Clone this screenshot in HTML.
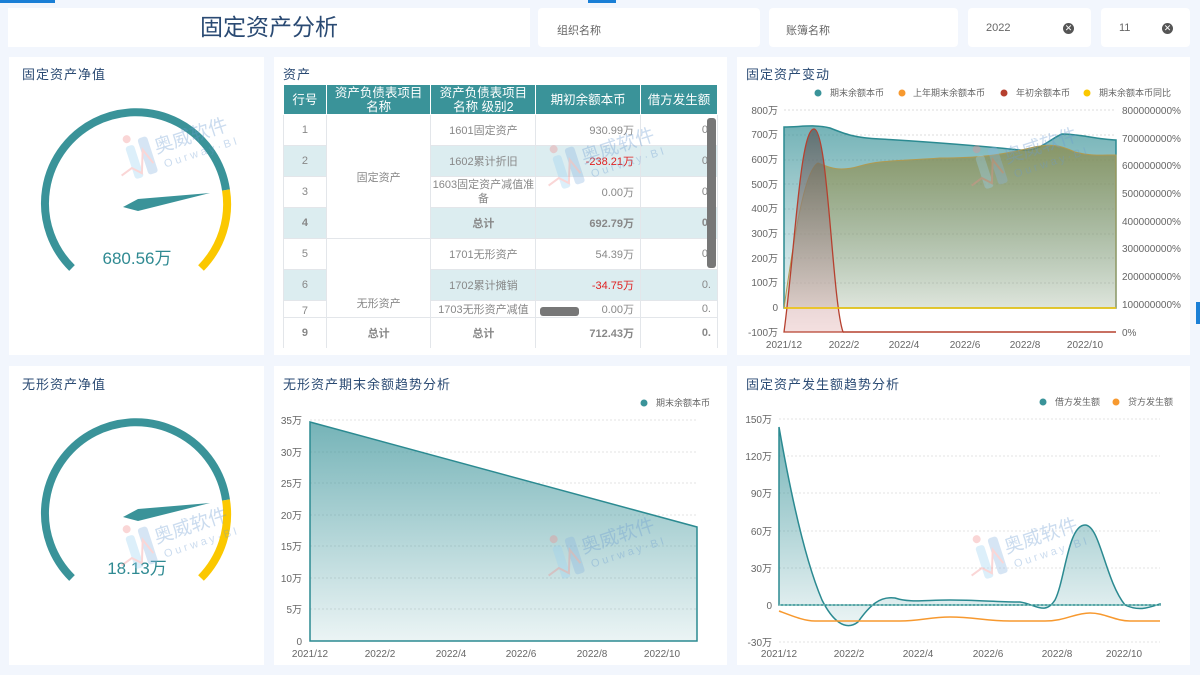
<!DOCTYPE html>
<html><head><meta charset="utf-8"><style>
*{margin:0;padding:0;box-sizing:border-box}
body{width:1200px;height:675px;background:#f2f6fd;font-family:"Liberation Sans","Noto Sans CJK SC",sans-serif;position:relative;overflow:hidden}
.p{position:absolute;background:#fff}
.t{position:absolute;font-size:13px;color:#2a4a73;letter-spacing:1px}
.f{position:absolute;background:#fff;border-radius:4px;font-size:11px;color:#666}
.x{position:absolute;width:11px;height:11px;border-radius:50%;background:#555;color:#fff;font-size:9px;line-height:11px;text-align:center}
table{border-collapse:collapse;position:absolute;left:283px;top:84px;font-size:11px;color:#888;table-layout:fixed}
td,th{border:1px solid #e3e6ea;text-align:center;overflow:hidden;white-space:nowrap}
th{background:#3a9399;color:#fff;font-weight:normal;height:30px;line-height:14px;white-space:normal;border-color:#fff;font-size:12.5px;word-break:break-all;padding:0 2px}
td{height:31px}
.b td.s{background:#dcedf0}
.r{color:#e02020;text-align:right;padding-right:6px}
.n{text-align:right;padding-right:6px}
</style></head><body>
<div style="position:absolute;left:0;top:0;width:55px;height:3px;background:#1a7fd6"></div>
<div style="position:absolute;left:588px;top:0;width:28px;height:3px;background:#1a7fd6"></div>
<div style="position:absolute;left:1196px;top:302px;width:4px;height:22px;background:#1a7fd6"></div>
<div class="p" style="left:8px;top:8px;width:522px;height:39px;font-size:23px;color:#2a4a73;text-align:center;line-height:39px">固定资产分析</div>
<div class="f" style="left:538px;top:8px;width:222px;height:39px;padding:14px 0 0 19px">组织名称</div>
<div class="f" style="left:769px;top:8px;width:189px;height:39px;padding:14px 0 0 17px">账簿名称</div>
<div class="f" style="left:968px;top:8px;width:123px;height:39px;padding:14px 0 0 18px">2022<div class="x" style="left:95px;top:15px">✕</div></div>
<div class="f" style="left:1101px;top:8px;width:89px;height:39px;padding:14px 0 0 18px">11<div class="x" style="left:61px;top:15px">✕</div></div>

<div class="p" style="left:9px;top:57px;width:255px;height:298px"></div>
<div class="p" style="left:274px;top:57px;width:453px;height:298px"></div>
<div class="p" style="left:737px;top:57px;width:453px;height:298px"></div>
<div class="p" style="left:9px;top:366px;width:255px;height:299px"></div>
<div class="p" style="left:274px;top:366px;width:453px;height:299px"></div>
<div class="p" style="left:737px;top:366px;width:453px;height:299px"></div>
<div class="t" style="left:22px;top:64px">固定资产净值</div>
<div class="t" style="left:283px;top:64px">资产</div>
<div class="t" style="left:746px;top:64px">固定资产变动</div>
<div class="t" style="left:22px;top:374px">无形资产净值</div>
<div class="t" style="left:283px;top:374px">无形资产期末余额趋势分析</div>
<div class="t" style="left:746px;top:374px">固定资产发生额趋势分析</div>

<div style="position:absolute;left:283px;top:84px;width:435px;height:264px;overflow:hidden">
<table style="left:0;top:0">
<colgroup><col style="width:43px"><col style="width:105px"><col style="width:105px"><col style="width:105px"><col style="width:77px"></colgroup>
<tr><th>行号</th><th>资产负债表项目名称</th><th>资产负债表项目名称 级别2</th><th>期初余额本币</th><th style="white-space:nowrap">借方发生额</th></tr>
<tr><td>1</td><td rowspan="4">固定资产</td><td>1601固定资产</td><td class="n">930.99万</td><td class="n">0.</td></tr>
<tr class="b"><td class="s">2</td><td class="s">1602累计折旧</td><td class="s r">-238.21万</td><td class="s n">0.</td></tr>
<tr><td>3</td><td style="white-space:normal;line-height:14px">1603固定资产减值准备</td><td class="n">0.00万</td><td class="n">0.</td></tr>
<tr class="b"><td class="s"><b>4</b></td><td class="s"><b>总计</b></td><td class="s n"><b>692.79万</b></td><td class="s n"><b>0.</b></td></tr>
<tr><td>5</td><td rowspan="3" style="vertical-align:bottom;padding-bottom:6px">无形资产</td><td>1701无形资产</td><td class="n">54.39万</td><td class="n">0.</td></tr>
<tr class="b"><td class="s">6</td><td class="s">1702累计摊销</td><td class="s r">-34.75万</td><td class="s n">0.</td></tr>
<tr><td style="height:16px;vertical-align:bottom">7</td><td style="height:16px">1703无形资产减值</td><td class="n" style="height:16px">0.00万</td><td class="n" style="height:16px">0.</td></tr>
<tr><td style="height:31px"><b>9</b></td><td><b>总计</b></td><td><b>总计</b></td><td class="n"><b>712.43万</b></td><td class="n"><b>0.</b></td></tr>
</table></div>
<div style="position:absolute;left:707px;top:118px;width:9px;height:150px;background:#777;border-radius:3px"></div>
<div style="position:absolute;left:540px;top:307px;width:39px;height:9px;background:#777;border-radius:3px"></div>

<svg width="1200" height="675" style="position:absolute;left:0;top:0" font-family="Liberation Sans,Noto Sans CJK SC,sans-serif">
<defs>
<linearGradient id="g1" x1="0" y1="0" x2="0" y2="1"><stop offset="0" stop-color="#3a9399" stop-opacity=".7"/><stop offset="1" stop-color="#3a9399" stop-opacity=".1"/></linearGradient>
<linearGradient id="g2" x1="0" y1="0" x2="0" y2="1"><stop offset="0" stop-color="#8a8a4a" stop-opacity=".75"/><stop offset="1" stop-color="#aaa878" stop-opacity=".2"/></linearGradient>
<linearGradient id="g3" x1="0" y1="0" x2="0" y2="1"><stop offset="0" stop-color="#555" stop-opacity=".7"/><stop offset="1" stop-color="#e9c0c0" stop-opacity=".5"/></linearGradient>
<g id="wm"><rect x="14" y="12" width="9" height="34" rx="3" fill="#9cd0f0"/><rect x="28" y="8" width="10" height="38" rx="3" fill="#8ab4e0"/><circle cx="18" cy="5" r="4" fill="#f08a8a"/><path d="M2 38 L14 34 L22 42 L30 20 L36 36" fill="none" stroke="#f08a8a" stroke-width="2"/><text x="42" y="28" font-size="19" fill="#6a9ad0">奥威软件</text><text x="46" y="44" font-size="11" fill="#6a9ad0" letter-spacing="3">Ourway·BI</text></g>
</defs>
<!-- gauges -->
<g fill="none" stroke-width="8">
<path d="M72 268 A91 91 0 1 1 226 190" stroke="#3a9399"/>
<path d="M226 190 A91 91 0 0 1 201 268" stroke="#fbc800"/>
<path d="M72 578 A91 91 0 1 1 226 500" stroke="#3a9399"/>
<path d="M226 500 A91 91 0 0 1 201 578" stroke="#fbc800"/>
</g>
<polygon points="123,207 138,199 210,193 138,211" fill="#3a9399"/>
<polygon points="123,517 138,509 210,503 138,521" fill="#3a9399"/>
<text x="137" y="264" font-size="17" fill="#2f8a92" text-anchor="middle">680.56万</text>
<text x="137" y="574" font-size="17" fill="#2f8a92" text-anchor="middle">18.13万</text>

<!-- top-right chart -->
<g font-size="10" fill="#666">
<g stroke="#ddd" stroke-dasharray="2,2">
<line x1="784" y1="110" x2="1116" y2="110"/><line x1="784" y1="135" x2="1116" y2="135"/><line x1="784" y1="160" x2="1116" y2="160"/><line x1="784" y1="184" x2="1116" y2="184"/><line x1="784" y1="209" x2="1116" y2="209"/><line x1="784" y1="234" x2="1116" y2="234"/><line x1="784" y1="258" x2="1116" y2="258"/><line x1="784" y1="283" x2="1116" y2="283"/></g>
<text x="778" y="114" text-anchor="end">800万</text><text x="778" y="138" text-anchor="end">700万</text><text x="778" y="163" text-anchor="end">600万</text><text x="778" y="188" text-anchor="end">500万</text><text x="778" y="212" text-anchor="end">400万</text><text x="778" y="237" text-anchor="end">300万</text><text x="778" y="262" text-anchor="end">200万</text><text x="778" y="286" text-anchor="end">100万</text><text x="778" y="311" text-anchor="end">0</text><text x="778" y="336" text-anchor="end">-100万</text>
<text x="1122" y="114">800000000%</text><text x="1122" y="142">700000000%</text><text x="1122" y="169">600000000%</text><text x="1122" y="197">500000000%</text><text x="1122" y="225">400000000%</text><text x="1122" y="252">300000000%</text><text x="1122" y="280">200000000%</text><text x="1122" y="308">100000000%</text><text x="1122" y="336">0%</text>
<text x="784" y="348" text-anchor="middle">2021/12</text><text x="844" y="348" text-anchor="middle">2022/2</text><text x="904" y="348" text-anchor="middle">2022/4</text><text x="965" y="348" text-anchor="middle">2022/6</text><text x="1025" y="348" text-anchor="middle">2022/8</text><text x="1085" y="348" text-anchor="middle">2022/10</text>
<circle cx="818" cy="93" r="3.5" fill="#3a9399"/><text x="830" y="96" font-size="9">期末余额本币</text>
<circle cx="902" cy="93" r="3.5" fill="#f7992f"/><text x="913" y="96" font-size="9">上年期末余额本币</text>
<circle cx="1004" cy="93" r="3.5" fill="#b6402f"/><text x="1016" y="96" font-size="9">年初余额本币</text>
<circle cx="1087" cy="93" r="3.5" fill="#fbc800"/><text x="1099" y="96" font-size="9">期末余额本币同比</text>
</g>
<path d="M784 127 C800 127 815 124 830 128 C845 134 855 138 880 139 C930 142 980 146 1020 150 C1040 152 1048 140 1062 134 C1080 134 1095 139 1116 140 L1116 308 L784 308 Z" fill="url(#g1)" stroke="#2b8a91" stroke-width="1.5"/>
<path d="M784 308 C795 230 805 170 818 163 C830 168 840 172 860 166 C880 160 900 161 940 158 C980 158 1000 155 1030 148 C1050 143 1060 145 1075 152 C1090 156 1100 155 1116 155 L1116 308 Z" fill="url(#g2)" stroke="#b09a50" stroke-width="1"/>
<path d="M784 332 C795 250 800 129 814 129 C828 129 832 300 843 332 Z" fill="url(#g3)" stroke="#b6402f" stroke-width="1.3"/>
<line x1="784" y1="308" x2="1116" y2="308" stroke="#fbc800" stroke-width="1.5"/>
<line x1="843" y1="332" x2="1116" y2="332" stroke="#b6402f" stroke-width="1.5"/>

<!-- bottom-middle chart -->
<g font-size="10" fill="#666">
<g stroke="#e3e3e3" stroke-dasharray="2,2">
<line x1="310" y1="420" x2="697" y2="420"/><line x1="310" y1="452" x2="697" y2="452"/><line x1="310" y1="483" x2="697" y2="483"/><line x1="310" y1="515" x2="697" y2="515"/><line x1="310" y1="546" x2="697" y2="546"/><line x1="310" y1="578" x2="697" y2="578"/><line x1="310" y1="609" x2="697" y2="609"/></g>
<text x="302" y="424" text-anchor="end">35万</text><text x="302" y="456" text-anchor="end">30万</text><text x="302" y="487" text-anchor="end">25万</text><text x="302" y="519" text-anchor="end">20万</text><text x="302" y="550" text-anchor="end">15万</text><text x="302" y="582" text-anchor="end">10万</text><text x="302" y="613" text-anchor="end">5万</text><text x="302" y="645" text-anchor="end">0</text>
<text x="310" y="657" text-anchor="middle">2021/12</text><text x="380" y="657" text-anchor="middle">2022/2</text><text x="451" y="657" text-anchor="middle">2022/4</text><text x="521" y="657" text-anchor="middle">2022/6</text><text x="592" y="657" text-anchor="middle">2022/8</text><text x="662" y="657" text-anchor="middle">2022/10</text>
<circle cx="644" cy="403" r="3.5" fill="#3a9399"/><text x="656" y="406" font-size="9">期末余额本币</text>
</g>
<path d="M310 422 L697 527 L697 641 L310 641 Z" fill="url(#g1)" stroke="#2b8a91" stroke-width="1.5"/>

<!-- bottom-right chart -->
<g font-size="10" fill="#666">
<g stroke="#e3e3e3" stroke-dasharray="2,2">
<line x1="779" y1="419" x2="1160" y2="419"/><line x1="779" y1="456" x2="1160" y2="456"/><line x1="779" y1="493" x2="1160" y2="493"/><line x1="779" y1="531" x2="1160" y2="531"/><line x1="779" y1="568" x2="1160" y2="568"/><line x1="779" y1="642" x2="1160" y2="642"/></g>
<text x="772" y="423" text-anchor="end">150万</text><text x="772" y="460" text-anchor="end">120万</text><text x="772" y="497" text-anchor="end">90万</text><text x="772" y="535" text-anchor="end">60万</text><text x="772" y="572" text-anchor="end">30万</text><text x="772" y="609" text-anchor="end">0</text><text x="772" y="646" text-anchor="end">-30万</text>
<text x="779" y="657" text-anchor="middle">2021/12</text><text x="849" y="657" text-anchor="middle">2022/2</text><text x="918" y="657" text-anchor="middle">2022/4</text><text x="988" y="657" text-anchor="middle">2022/6</text><text x="1057" y="657" text-anchor="middle">2022/8</text><text x="1124" y="657" text-anchor="middle">2022/10</text>
<circle cx="1043" cy="402" r="3.5" fill="#3a9399"/><text x="1055" y="405" font-size="9">借方发生额</text>
<circle cx="1116" cy="402" r="3.5" fill="#f7992f"/><text x="1128" y="405" font-size="9">贷方发生额</text>
</g>
<path d="M779 427 C790 490 805 560 822 600 C832 620 845 632 858 622 C870 605 880 596 895 598 C910 603 925 600 950 600 C975 600 1000 602 1020 602 C1035 604 1045 616 1055 600 C1065 580 1068 525 1085 525 C1100 525 1105 580 1125 605 C1140 612 1150 607 1160 604 L1160 605 L779 605 Z" fill="url(#g1)" stroke="#2b8a91" stroke-width="1.5"/>
<line x1="779" y1="605" x2="1160" y2="605" stroke="#8cb" stroke-dasharray="2,2"/>
<path d="M779 611 C795 617 805 621 815 621 L900 621 C920 621 930 617 950 617 C975 617 985 621 1010 621 L1045 621 C1065 621 1075 613 1090 613 C1105 613 1115 621 1130 621 L1160 621" fill="none" stroke="#f7992f" stroke-width="1.5"/>

<!-- watermarks -->
<g opacity=".35">
<use href="#wm" transform="translate(108,140) rotate(-18)"/>
<use href="#wm" transform="translate(535,150) rotate(-18)"/>
<use href="#wm" transform="translate(958,150) rotate(-18)"/>
<use href="#wm" transform="translate(108,530) rotate(-18)"/>
<use href="#wm" transform="translate(535,540) rotate(-18)"/>
<use href="#wm" transform="translate(958,540) rotate(-18)"/>
</g>
</svg>
</body></html>
